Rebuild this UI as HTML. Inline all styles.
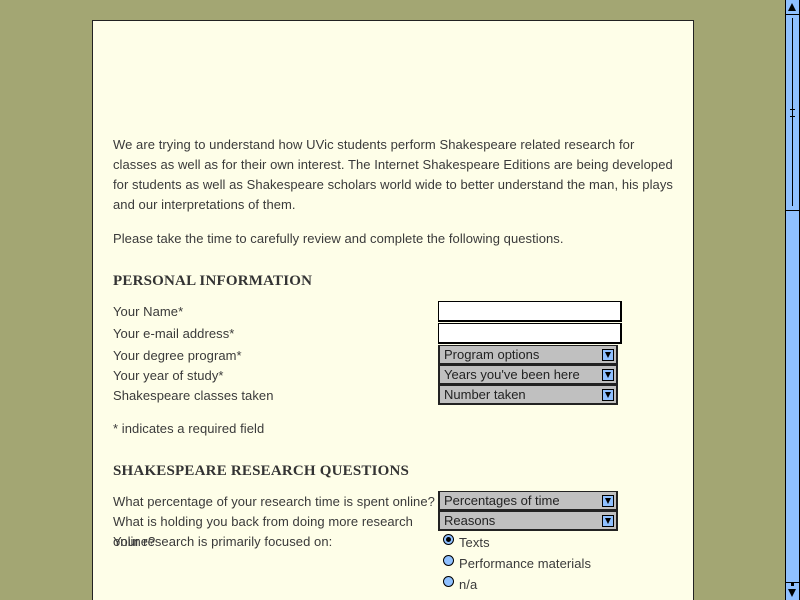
<!DOCTYPE html>
<html style="overflow:hidden"><head><style>
html,body{margin:0;width:800px;height:600px;overflow:hidden}
body{background:#a3a673;font-family:"Liberation Sans",sans-serif;position:relative}
#p{position:absolute;left:92px;top:20px;width:600px;height:580px;background:#fefee8;border:1px solid #222;border-bottom:none}
.t{position:absolute;left:113px;font-size:13px;letter-spacing:.06px;color:#3a3a3a;white-space:nowrap;line-height:20px}
h2{position:absolute;left:113px;margin:0;font:bold 15px "Liberation Serif",serif;color:#333;letter-spacing:.2px}
.in{position:absolute;left:438px;width:184px;height:21px;background:#fff;border:1px solid #000;border-width:1px 2px 2px 1px;box-sizing:border-box}
.sel{position:absolute;left:438px;width:180px;height:20px;background:#c0c0c0;border:2px solid #222;border-top-width:1px;box-sizing:border-box;font-size:13px;color:#222;line-height:18px;padding-left:4px}
.sel i{position:absolute;right:2px;top:3px;width:12px;height:12px;background:#8fc0ff;border:1px solid #000;box-sizing:border-box}
.sel i:after{content:"";position:absolute;left:2px;top:2px;border-left:3px solid transparent;border-right:3px solid transparent;border-top:6px solid #000}
.r{position:absolute;left:443px;width:11px;height:11px;border-radius:50%;background:#8fc0ff;border:1px solid #000;box-sizing:border-box}
.r.on:after{content:"";position:absolute;left:2px;top:2px;width:5px;height:5px;border-radius:50%;background:#000}
#sb{position:absolute;left:785px;top:0;width:15px;height:600px;background:#8fc0ff;border-left:1px solid #000;border-right:1px solid #000;box-sizing:border-box}
</style></head><body>
<div id="p"></div>
<div class="t" style="top:135px">We are trying to understand how UVic students perform Shakespeare related research for<br>classes as well as for their own interest. The Internet Shakespeare Editions are being developed<br>for students as well as Shakespeare scholars world wide to better understand the man, his plays<br>and our interpretations of them.</div>
<div class="t" style="top:229px">Please take the time to carefully review and complete the following questions.</div>
<h2 style="top:273px">PERSONAL INFORMATION</h2>
<div class="t" style="top:302px">Your Name*</div>
<div class="t" style="top:324px">Your e-mail address*</div>
<div class="t" style="top:346px">Your degree program*</div>
<div class="t" style="top:366px">Your year of study*</div>
<div class="t" style="top:386px">Shakespeare classes taken</div>
<div class="t" style="top:419px">* indicates a required field</div>
<div class="in" style="top:301px"></div>
<div class="in" style="top:323px"></div>
<div class="sel" style="top:345px">Program options<i></i></div>
<div class="sel" style="top:365px">Years you've been here<i></i></div>
<div class="sel" style="top:385px">Number taken<i></i></div>
<h2 style="top:463px">SHAKESPEARE RESEARCH QUESTIONS</h2>
<div class="t" style="top:492px">What percentage of your research time is spent online?</div>
<div class="t" style="top:512px">What is holding you back from doing more research</div>
<div class="t" style="top:532px">online?</div>
<div class="t" style="top:532px">Your research is primarily focused on:</div>
<div class="sel" style="top:491px">Percentages of time<i></i></div>
<div class="sel" style="top:511px">Reasons<i></i></div>
<div class="r on" style="top:534px"></div><div class="t" style="left:459px;top:533px">Texts</div>
<div class="r" style="top:555px"></div><div class="t" style="left:459px;top:554px">Performance materials</div>
<div class="r" style="top:576px"></div><div class="t" style="left:459px;top:575px">n/a</div>
<div id="sb">
<div style="position:absolute;left:0;top:0;width:13px;height:15px;border-bottom:1px solid #000;box-sizing:border-box"><div style="position:absolute;left:2px;top:3px;border-left:4px solid transparent;border-right:4px solid transparent;border-bottom:8px solid #000"></div></div>
<div style="position:absolute;left:0;top:15px;width:13px;height:196px;border-bottom:1px solid #000;box-sizing:border-box"><div style="position:absolute;left:6px;top:3px;width:1px;height:188px;background:#000"></div><div style="position:absolute;left:4px;top:94px;width:5px;height:1px;background:#000"></div><div style="position:absolute;left:4px;top:101px;width:5px;height:1px;background:#000"></div></div>
<div style="position:absolute;left:0;top:582px;width:13px;height:18px;border-top:1px solid #000;box-sizing:border-box"><div style="position:absolute;left:5px;top:0;width:3px;height:3px;background:#000"></div><div style="position:absolute;left:2px;top:6px;border-left:4px solid transparent;border-right:4px solid transparent;border-top:8px solid #000"></div></div>
</div>
</body></html>
